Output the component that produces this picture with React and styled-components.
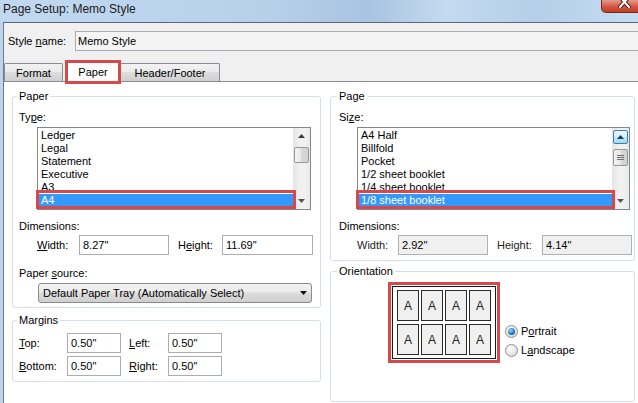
import React from 'react';
import styled, { createGlobalStyle, css } from 'styled-components';

const Global = createGlobalStyle`
  html, body { margin: 0; padding: 0; background: #fff; }
  body { font-family: "Liberation Sans", Arial, sans-serif; font-size: 11px; color: #000; }
  * { box-sizing: border-box; }
`;

const Window = styled.div`
  width: 638px;
  height: 403px;
  overflow: hidden;
  display: flex;
  flex-direction: column;
  background: #bcd4ee;
`;

const TitleBar = styled.div`
  height: 22px;
  flex: none;
  display: flex;
  align-items: flex-start;
  justify-content: space-between;
  background: linear-gradient(90deg, #c1d8f0 0%, #b8d1eb 40%, #a9c4e1 58%, #c4daf0 70%, #b5cee9 84%, #c6dcf2 100%);
`;

const Title = styled.div`
  padding: 1px 0 0 3px;
  font-size: 12px;
  line-height: 16px;
  color: #1b1b1b;
`;

const CloseButton = styled.div`
  width: 46px;
  height: 13px;
  margin-right: -9px;
  border: 1px solid #6b2a22;
  border-top: none;
  border-radius: 0 0 5px 5px;
  background: linear-gradient(#e39a8a, #d4583f 55%, #c23b25);
  display: flex;
  justify-content: center;
  overflow: hidden;
  svg { margin-top: -4px; }
`;

const Dialog = styled.div`
  flex: 1;
  min-height: 0;
  margin-left: 3px;
  border-left: 1px solid #6f7b89;
  border-top: 1px solid #5b6878;
  background: #f0f0f0;
  display: flex;
  flex-direction: column;
`;

const StyleRow = styled.div`
  display: flex;
  align-items: center;
  padding: 8px 0 0 4px;
`;

const FieldLabel = styled.span`
  flex: none;
  width: ${p => p.$w}px;
  margin-left: ${p => p.$ml || 0}px;
  line-height: 15px;
  white-space: nowrap;
  color: ${p => (p.$dim ? '#222' : '#000')};
`;

const NameInput = styled.input`
  flex: 1;
  height: 20px;
  margin-right: -12px;
  border: 1px solid #abadb3;
  background: #f4f4f4;
  padding: 0 2px;
  font: inherit;
  color: #000;
  outline: none;
`;

const TabStrip = styled.div`
  height: 22px;
  margin-top: 9px;
  display: flex;
  align-items: flex-end;
  border-bottom: 1px solid #898c95;
`;

const Tab = styled.div`
  position: relative;
  width: ${p => p.$w}px;
  margin-left: ${p => p.$ml || 0}px;
  height: 18px;
  border: 1px solid #898c95;
  border-bottom: none;
  border-radius: 2px 2px 0 0;
  background: linear-gradient(#f2f2f2, #ebebeb 45%, #dddddd 50%, #cfcfcf);
  display: flex;
  align-items: center;
  justify-content: center;
  line-height: 16px;
  ${p => p.$active && css`
    z-index: 2;
    height: 24px;
    margin-bottom: -3px;
    border: 3px solid #d6484b;
    border-radius: 0;
    background: #fff;
  `}
`;

const TabPage = styled.div`
  flex: 1;
  background: #fff;
  display: grid;
  grid-template-columns: 309px 305px;
  column-gap: 9px;
  align-items: start;
  padding: 14px 0 0 8px;
`;

const Column = styled.div`
  display: flex;
  flex-direction: column;
`;

const Group = styled.div`
  border: 1px solid #d5dfe5;
  border-radius: 3px;
  margin-top: ${p => p.$mt || 0}px;
  padding: 0 ${p => p.$pr}px ${p => p.$pb}px ${p => p.$pl}px;
`;

const Legend = styled.div`
  width: fit-content;
  margin: -8px 0 0 -2px;
  padding: 0 2px;
  background: #fff;
  line-height: 15px;
`;

const Label = styled.div`
  margin-top: ${p => p.$mt}px;
  line-height: 15px;
`;

const ListBox = styled.div`
  position: relative;
  display: flex;
  height: 83px;
  margin: 2px 0 0 18px;
  border: 1px solid #828790;
  background: #fff;
`;

const Items = styled.div`
  flex: 1;
  overflow: hidden;
  display: flex;
  flex-direction: column;
  padding-top: 1px;
`;

const Item = styled.div`
  flex: none;
  height: 13px;
  line-height: 13px;
  padding-left: 3px;
  white-space: nowrap;
  ${p => p.$selected && css`
    background: #3399ff;
    color: #fff;
  `}
`;

const Highlight = styled.div`
  position: absolute;
  left: -2px;
  right: 14px;
  top: 62px;
  height: 19px;
  border: 3px solid #d6484b;
  pointer-events: none;
`;

const Scrollbar = styled.div`
  width: 17px;
  flex: none;
  display: flex;
  flex-direction: column;
  align-items: stretch;
  background: linear-gradient(90deg, #e4e4e4, #f1f1f1 40%, #f1f1f1 70%, #e9e9e9);
`;

const ScrollButton = styled.div`
  height: ${p => (p.$hot ? 14 : 16)}px;
  margin: ${p => (p.$hot ? '2px 1px 0' : '0')};
  display: flex;
  align-items: center;
  justify-content: center;
  ${p => p.$hot && css`
    border: 1px solid #3c7fb1;
    border-radius: 2px;
    background: linear-gradient(#eaf6fd, #d9f0fc 50%, #bee6fd 50%, #a7d9f5);
  `}
`;

const Thumb = styled.div`
  height: ${p => p.$h}px;
  margin: ${p => p.$mt}px 1px 0;
  border: 1px solid #979797;
  border-radius: 2px;
  background: linear-gradient(90deg, #f3f3f3, #e8e8e8 50%, #d9d9d9 50%, #d2d2d2);
  display: flex;
  align-items: center;
  justify-content: center;
`;

const Spacer = styled.div`
  flex: 1;
`;

const DimRow = styled.div`
  display: flex;
  align-items: center;
  margin-top: ${p => p.$mt}px;
  padding-left: ${p => p.$pl || 0}px;
`;

const TextBox = styled.input`
  flex: none;
  width: ${p => p.$w}px;
  height: 20px;
  border: 1px solid ${p => (p.$disabled ? '#adb2b5' : '#abadb3')};
  background: ${p => (p.$disabled ? '#f0f0f0' : '#fff')};
  padding: 0 3px;
  font: inherit;
  color: #000;
  outline: none;
`;

const Select = styled.div`
  height: 20px;
  margin: 2px -1px 0 19px;
  border: 1px solid #8a8a8a;
  border-radius: 3px;
  background: linear-gradient(#f2f2f2, #ebebeb 45%, #dddddd 50%, #cfcfcf);
  display: flex;
  align-items: center;
  justify-content: space-between;
  padding: 0 4px;
  line-height: 16px;
`;

const MarginRow = styled.div`
  display: flex;
  align-items: center;
  margin-top: ${p => p.$mt}px;
`;

const OrientationBody = styled.div`
  display: flex;
  align-items: flex-start;
  margin: 3px 0 0 49px;
`;

const PreviewFrame = styled.div`
  border: 3px solid #d6484b;
  padding: 1px;
  background: #fff;
`;

const PreviewInner = styled.div`
  border: 1px solid #1a1a1a;
  padding: 3px 4px;
  display: grid;
  grid-template-columns: repeat(4, 22px);
  grid-auto-rows: 31px;
  gap: 3px 2px;
`;

const Sheet = styled.div`
  border: 1px solid #2a2a2a;
  background: #f0f0f0;
  display: flex;
  align-items: center;
  justify-content: center;
  font-size: 12px;
  color: #222;
`;

const RadioColumn = styled.div`
  display: flex;
  flex-direction: column;
  margin: 40px 0 0 5px;
`;

const RadioRow = styled.label`
  display: flex;
  align-items: center;
  height: 19px;
  gap: 3px;
`;

const RadioText = styled.span`
  line-height: 15px;
  white-space: nowrap;
`;

const RadioCircle = styled.span`
  width: 13px;
  height: 13px;
  border-radius: 50%;
  border: 1px solid #8e8f8f;
  background: radial-gradient(circle at 40% 35%, #ffffff, #e2e2e2 65%, #cacaca);
  display: flex;
  align-items: center;
  justify-content: center;
  ${p => p.$checked && css`
    &::after {
      content: '';
      width: 7px;
      height: 7px;
      border-radius: 50%;
      background: radial-gradient(circle at 40% 35%, #8fd8fa, #1478c0 60%, #0b416f);
    }
  `}
`;

const UpArrow = ({ color = '#3c3c3c' }) => (
  <svg width="7" height="4" viewBox="0 0 7 4"><polygon points="0,4 3.5,0 7,4" fill={color} /></svg>
);
const DownArrow = ({ color = '#3c3c3c' }) => (
  <svg width="7" height="4" viewBox="0 0 7 4"><polygon points="0,0 7,0 3.5,4" fill={color} /></svg>
);
const Grip = () => (
  <svg width="7" height="7" viewBox="0 0 7 7">
    <path d="M0 1.5h7M0 3.5h7M0 5.5h7" stroke="#6f6f6f" strokeWidth="1" />
  </svg>
);
const CloseX = () => (
  <svg width="13" height="12" viewBox="0 0 13 12">
    <path d="M2 1l9 10M11 1l-9 10" stroke="#4a1d16" strokeWidth="4" strokeLinecap="square" />
    <path d="M2 1l9 10M11 1l-9 10" stroke="#ffffff" strokeWidth="2" strokeLinecap="square" />
  </svg>
);

const List = ({ items, selected, hot }) => (
  <ListBox>
    <Items>
      {items.map(it => (
        <Item key={it} $selected={it === selected}>{it}</Item>
      ))}
    </Items>
    <Scrollbar>
      <ScrollButton $hot={hot}><UpArrow color={hot ? '#1c3f5e' : '#3c3c3c'} /></ScrollButton>
      {hot ? (
        <Thumb $h={17} $mt={5}><Grip /></Thumb>
      ) : (
        <Thumb $h={16} $mt={3} />
      )}
      <Spacer />
      <ScrollButton><DownArrow color="#555" /></ScrollButton>
    </Scrollbar>
    <Highlight />
  </ListBox>
);

export default function App() {
  return (
    <>
      <Global />
      <Window>
        <TitleBar>
          <Title>Page Setup: Memo Style</Title>
          <CloseButton><CloseX /></CloseButton>
        </TitleBar>
        <Dialog>
          <StyleRow>
            <FieldLabel $w={67}>Style <u>n</u>ame:</FieldLabel>
            <NameInput readOnly value="Memo Style" />
          </StyleRow>
          <TabStrip>
            <Tab $w={59}>Format</Tab>
            <Tab $w={56} $ml={2} $active>Paper</Tab>
            <Tab $w={100} $ml={-1}>Header/Footer</Tab>
          </TabStrip>
          <TabPage>
            <Column>
              <Group $pl={6} $pr={9} $pb={4}>
                <Legend>Paper</Legend>
                <Label $mt={6}>Ty<u>p</u>e:</Label>
                <List items={['Ledger', 'Legal', 'Statement', 'Executive', 'A3', 'A4']} selected="A4" />
                <Label $mt={9}>Dimensions:</Label>
                <DimRow $mt={1} $pl={18}>
                  <FieldLabel $w={42}><u>W</u>idth:</FieldLabel>
                  <TextBox $w={90} readOnly value={'8.27"'} />
                  <FieldLabel $w={44} $ml={9}>H<u>e</u>ight:</FieldLabel>
                  <TextBox $w={91} readOnly value={'11.69"'} />
                </DimRow>
                <Label $mt={11}>Paper <u>s</u>ource:</Label>
                <Select>
                  <span>Default Paper Tray (Automatically Select)</span>
                  <DownArrow color="#111" />
                </Select>
              </Group>
              <Group $mt={12} $pl={6} $pr={9} $pb={5}>
                <Legend>Margins</Legend>
                <MarginRow $mt={5}>
                  <FieldLabel $w={48}><u>T</u>op:</FieldLabel>
                  <TextBox $w={54} readOnly value={'0.50"'} />
                  <FieldLabel $w={39} $ml={8}><u>L</u>eft:</FieldLabel>
                  <TextBox $w={54} readOnly value={'0.50"'} />
                </MarginRow>
                <MarginRow $mt={3}>
                  <FieldLabel $w={48}><u>B</u>ottom:</FieldLabel>
                  <TextBox $w={54} readOnly value={'0.50"'} />
                  <FieldLabel $w={39} $ml={8}><u>R</u>ight:</FieldLabel>
                  <TextBox $w={54} readOnly value={'0.50"'} />
                </MarginRow>
              </Group>
            </Column>
            <Column>
              <Group $pl={8} $pr={4} $pb={5}>
                <Legend>Page</Legend>
                <Label $mt={6}>Si<u>z</u>e:</Label>
                <List
                  items={['A4 Half', 'Billfold', 'Pocket', '1/2 sheet booklet', '1/4 sheet booklet', '1/8 sheet booklet']}
                  selected="1/8 sheet booklet"
                  hot
                />
                <Label $mt={9}>Dimensions:</Label>
                <DimRow $mt={1} $pl={18}>
                  <FieldLabel $w={41} $dim>Width:</FieldLabel>
                  <TextBox $w={90} $disabled readOnly value={'2.92"'} />
                  <FieldLabel $w={45} $ml={9} $dim>Height:</FieldLabel>
                  <TextBox $w={90} $disabled readOnly value={'4.14"'} />
                </DimRow>
              </Group>
              <Group $mt={10} $pl={8} $pr={4} $pb={38}>
                <Legend>Orientation</Legend>
                <OrientationBody>
                  <PreviewFrame>
                    <PreviewInner>
                      {Array.from({ length: 8 }).map((_, i) => (
                        <Sheet key={i}>A</Sheet>
                      ))}
                    </PreviewInner>
                  </PreviewFrame>
                  <RadioColumn>
                    <RadioRow><RadioCircle $checked /><RadioText>P<u>o</u>rtrait</RadioText></RadioRow>
                    <RadioRow><RadioCircle /><RadioText>L<u>a</u>ndscape</RadioText></RadioRow>
                  </RadioColumn>
                </OrientationBody>
              </Group>
            </Column>
          </TabPage>
        </Dialog>
      </Window>
    </>
  );
}
